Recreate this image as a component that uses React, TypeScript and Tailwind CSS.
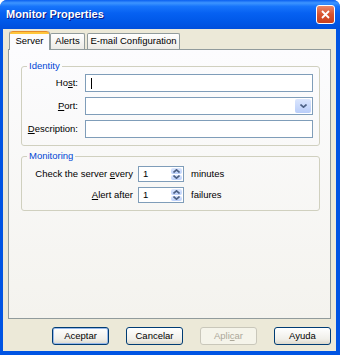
import React from "react";

const Label = ({ text, u }: { text: string; u: number }) => (
  <span>
    {text.slice(0, u)}
    <span className="underline underline-offset-1">{text[u]}</span>
    {text.slice(u + 1)}
  </span>
);

const Chevron = ({ up }: { up?: boolean }) => (
  <svg width="7" height="4" viewBox="0 0 7 4" className="block">
    <path
      d={up ? "M0.5 3.5 L3.5 0.8 L6.5 3.5" : "M0.5 0.5 L3.5 3.2 L6.5 0.5"}
      fill="none"
      stroke="#4d6185"
      strokeWidth="1.6"
    />
  </svg>
);

const Spin = () => (
  <div className="flex h-[16px] w-[46px] items-stretch border border-[#7f9db9] bg-white">
    <span className="flex-1 pl-[4px] leading-[14px]">1</span>
    <div className="my-[1px] mr-[1px] flex w-[11px] flex-col gap-[1px]">
      <div className="flex flex-1 items-center justify-center rounded-[2px] bg-[linear-gradient(to_bottom,#dbe6fd,#bcd0fa)]">
        <Chevron up />
      </div>
      <div className="flex flex-1 items-center justify-center rounded-[2px] bg-[linear-gradient(to_bottom,#dbe6fd,#bcd0fa)]">
        <Chevron />
      </div>
    </div>
  </div>
);

const Button = ({ children, primary, disabled }: { children: React.ReactNode; primary?: boolean; disabled?: boolean }) => (
  <div
    className={`flex h-[18px] w-[57px] items-center justify-center rounded-[3px] border ${
      disabled
        ? "border-[#c9c7ba] bg-[#f5f4ea] text-[#aca899]"
        : "border-[#003c74] bg-[linear-gradient(to_bottom,#ffffff,#f0efe9_70%,#dcd8cc)]"
    } ${primary ? "shadow-[inset_0_0_0_1px_#98b8ea]" : ""}`}
  >
    {children}
  </div>
);

export default function App() {
  return (
    <div className="h-[355px] w-[340px] bg-white font-['Liberation_Sans',Arial,sans-serif] text-[9.5px] text-black">
      <div className="flex h-full flex-col overflow-hidden rounded-t-[7px] bg-[#0054e3]">
        {/* title bar */}
        <div className="flex h-[29px] shrink-0 items-center justify-between bg-[linear-gradient(to_bottom,#0a5ff0,#3d95ff_10%,#1775fb_22%,#0661f2_45%,#0058e8_75%,#004fdc)] pl-[6px] pr-[5px]">
          <span className="text-[11px] font-bold text-white [text-shadow:1px_1px_0_#0a1883]">Monitor Properties</span>
          <div className="flex h-[19px] w-[19px] items-center justify-center rounded-[3px] border border-white bg-[linear-gradient(to_bottom,#e9876a,#d8532f_50%,#c8401f)]">
            <svg width="9" height="9" viewBox="0 0 9 9">
              <path d="M1 1 L8 8 M8 1 L1 8" stroke="white" strokeWidth="1.8" />
            </svg>
          </div>
        </div>

        {/* body */}
        <div className="mb-[4px] ml-[3px] mr-[4px] flex flex-1 flex-col bg-[#ece9d8] px-[5px] pt-[2px]">
          {/* tabs */}
          <div className="relative z-10 flex h-[18px] items-end pl-[1px]">
            <div className="-mb-[1px] flex h-[19px] w-[41px] flex-col rounded-t-[3px] border-x border-[#919b9c] bg-[#fcfcfe]">
              <div className="h-[3px] rounded-t-[3px] border-t border-[#e68b2c] bg-[#ffc73c]" />
              <div className="flex flex-1 items-center justify-center pb-[2px]">Server</div>
            </div>
            <div className="flex h-[16px] w-[35px] items-center justify-center rounded-t-[2px] border border-b-0 border-[#919b9c] bg-[linear-gradient(to_bottom,#ffffff,#ecebe6)]">
              Alerts
            </div>
            <div className="ml-[2px] flex h-[16px] w-[93px] items-center justify-center rounded-t-[2px] border border-b-0 border-[#919b9c] bg-[linear-gradient(to_bottom,#ffffff,#ecebe6)]">
              E-mail Configuration
            </div>
          </div>

          {/* panel */}
          <div className="h-[270px] border border-[#919b9c] bg-[linear-gradient(to_bottom,#fcfcfe,#f4f3ee)] pl-[12px] pr-[10px] pt-[10px]">
            <fieldset className="rounded-[3px] border border-[#d0d0bf] pb-[7px] pl-[5px] pr-[6px] pt-[2px]">
              <legend className="px-[2px] leading-[12px] text-[#0046d5]">Identity</legend>
              <div className="grid grid-cols-[51px_1fr] items-center gap-x-[7px] gap-y-[5px]">
                <span className="text-right">
                  <Label text="Host:" u={2} />
                </span>
                <div className="flex h-[18px] items-center border border-[#7f9db9] bg-white pl-[5px]">
                  <div className="h-[11px] w-[1px] bg-black" />
                </div>
                <span className="text-right">
                  <Label text="Port:" u={0} />
                </span>
                <div className="flex h-[18px] justify-end border border-[#7f9db9] bg-white p-[1px]">
                  <div className="flex w-[16px] items-center justify-center rounded-[2px] bg-[linear-gradient(to_bottom,#dbe6fd,#b9cdf9)]">
                    <Chevron />
                  </div>
                </div>
                <span className="text-right">
                  <Label text="Description:" u={0} />
                </span>
                <div className="h-[18px] border border-[#7f9db9] bg-white" />
              </div>
            </fieldset>

            <fieldset className="mt-[4px] rounded-[3px] border border-[#d0d0bf] pb-[7px] pl-[5px] pr-[6px] pt-[4px]">
              <legend className="px-[2px] leading-[12px] text-[#0046d5]">Monitoring</legend>
              <div className="grid grid-cols-[106px_46px_auto] items-center gap-x-[5px] gap-y-[5px]">
                <span className="text-right">
                  Check the server <Label text="every" u={0} />
                </span>
                <Spin />
                <span className="ml-[2px]">minutes</span>
                <span className="text-right">
                  <Label text="Alert after" u={0} />
                </span>
                <Spin />
                <span className="ml-[2px]">failures</span>
              </div>
            </fieldset>
          </div>

          {/* buttons */}
          <div className="mt-[8px] flex justify-end gap-[17px]">
            <Button primary>Aceptar</Button>
            <Button>Cancelar</Button>
            <Button disabled>
              <Label text="Aplicar" u={4} />
            </Button>
            <Button>Ayuda</Button>
          </div>
        </div>
      </div>
    </div>
  );
}
